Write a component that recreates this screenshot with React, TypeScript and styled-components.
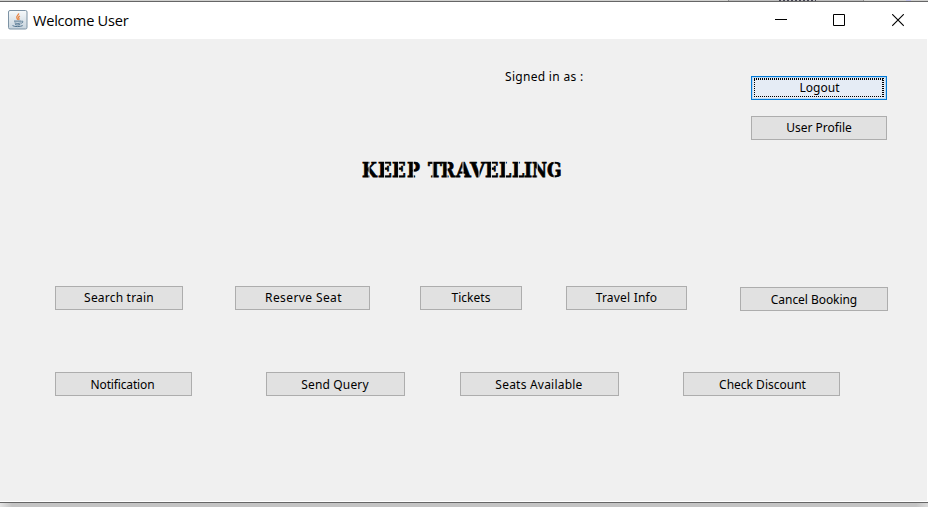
import React from "react";
import styled, { createGlobalStyle } from "styled-components";

const GlobalStyle = createGlobalStyle`
  * { box-sizing: border-box; }
  html, body { margin: 0; padding: 0; overflow: hidden; }
`;

const Desktop = styled.div`
  width: 928px;
  height: 507px;
  display: flex;
  flex-direction: column;
  overflow: hidden;
  background: linear-gradient(to right, #e4e4e4 0, #c4c4c4 12px, #c4c4c4 916px, #dadada 928px);
`;

const BackdropEdge = styled.div`
  height: 1px;
  flex: none;
  display: flex;
  background: #d1d1cf;
`;

const BackdropButton = styled.div`
  width: 136px;
  height: 1px;
  margin-left: 728px;
  background: #bdbdbd;
  border: solid #8e8e8e;
  border-width: 0 1px;
  padding-left: 50px;
`;

const BackdropText = styled.div`
  width: 37px;
  height: 1px;
  background: repeating-linear-gradient(to right, #434250 0 2px, #bdbdbd 2px 4px);
`;

const BackdropAccent = styled.div`
  width: 5px;
  height: 1px;
  margin-left: 42px;
  background: #bdbde4;
`;

const Window = styled.main`
  height: 502px;
  flex: none;
  display: flex;
  flex-direction: column;
  background: #fff;
  border-top: 1px solid #666;
  border-bottom: 1px solid #666;
`;

const TitleBar = styled.header`
  height: 37px;
  flex: none;
  display: flex;
  align-items: center;
  padding: 0 1px 2px 8px;
`;

const JavaIcon = styled.svg`
  width: 20px;
  height: 20px;
  display: block;
  flex: none;
`;

const WindowTitle = styled.div`
  margin-left: 5px;
  width: 120px;
  font: 14.6px/20px "Open Sans", "Noto Sans", sans-serif;
  letter-spacing: -0.25px;
  white-space: nowrap;
  color: #000;
`;

const Controls = styled.div`
  margin-left: auto;
  display: flex;
`;

const Control = styled.button<{ $width: number }>`
  width: ${(p) => p.$width}px;
  height: 37px;
  padding: 2px 0 0;
  border: 0;
  background: none;
  display: flex;
  align-items: center;
  justify-content: flex-start;
  & svg { display: block; }
`;

const Content = styled.section`
  height: 462px;
  flex: none;
  margin: 0 1px 1px 0;
  background: #f0f0f0;
  display: flex;
  flex-direction: column;
  font-family: "Noto Sans", sans-serif;
  color: #000;
`;

const Top = styled.div`
  display: flex;
  height: 101px;
  padding: 37px 0 0 505px;
`;

const Status = styled.div`
  width: 246px;
  height: 18px;
  margin-top: -8px;
  font-size: 12px;
  line-height: 18px;
  letter-spacing: 0.3px;
  white-space: pre;
`;

const AccountActions = styled.div`
  display: flex;
  flex-direction: column;
  gap: 16px;
`;

const Button = styled.button<{ $width: number; $spacing?: number; $gap?: number; $drop?: number; $low?: boolean; $indent?: number }>`
  width: ${(p) => p.$width}px;
  height: 24px;
  flex: none;
  margin: ${(p) => p.$drop ?? 0}px 0 0 ${(p) => p.$gap ?? 0}px;
  padding: ${(p) => (p.$low ? 1 : 0)}px 0 0;
  border: 1px solid #adadad;
  border-radius: 0;
  background: #e1e1e1;
  color: #000;
  font: 12px/${(p) => (p.$low ? 21 : 22)}px "Noto Sans", sans-serif;
  letter-spacing: ${(p) => p.$spacing ?? 0}px;
  text-indent: ${(p) => p.$indent ?? 0}px;
  white-space: nowrap;
`;

const FocusedButton = styled(Button)`
  border-color: #0078d7;
  background: #e5ecf5;
  box-shadow: inset 0 0 0 1px #b9d9f3;
  display: grid;
`;

const FocusMark = styled.span`
  margin: 1px 2px 2px;
  height: 19px;
  line-height: 19px;
  text-indent: 1px;
  background:
    repeating-linear-gradient(to right, #000 0 1px, transparent 1px 2px) 0 0 / 100% 2px no-repeat,
    repeating-linear-gradient(to right, #000 0 1px, transparent 1px 2px) 0 100% / 100% 1px no-repeat,
    repeating-linear-gradient(to bottom, #000 0 1px, transparent 1px 2px) 0 0 / 1px 100% no-repeat,
    repeating-linear-gradient(to bottom, #000 0 1px, transparent 1px 2px) 100% 0 / 2px 100% no-repeat;
`;

const Heading = styled.h1`
  display: flex;
  height: 28px;
  margin: 16px 0 0 361.5px;
  font: 900 20.5px/28px "DejaVu Serif", "Liberation Serif", serif;
  white-space: pre;
`;

const Word = styled.span`
  display: flex;
  margin-right: 7.5px;
`;

/* A heavy serif letter with the narrow vertical slit of a stencil plate. */
const StencilLetter = styled.span<{ $advance: number; $scale: number; $slit: number }>`
  position: relative;
  display: block;
  width: ${(p) => p.$advance / p.$scale}px;
  margin-right: ${(p) => p.$advance - p.$advance / p.$scale}px;
  transform: scaleX(${(p) => p.$scale});
  transform-origin: left;
  -webkit-text-stroke: 0.75px #000;
  &::after {
    content: "";
    position: absolute;
    left: ${(p) => p.$slit / p.$scale}px;
    top: 5px;
    width: ${(p) => 0.8 / p.$scale}px;
    height: 18px;
    background: #f0f0f0;
  }
`;

const MainActions = styled.nav`
  display: flex;
  height: 24px;
  margin-top: 102px;
  padding-left: 55px;
`;

const MoreActions = styled(MainActions)`
  margin-top: 62px;
`;

type Action = { label: string; width: number; gap: number; drop?: number; low?: boolean; spacing: number; indent?: number };

const mainActions: Action[] = [
  { label: "Search train", width: 128, gap: 0, spacing: 0.2 },
  { label: "Reserve Seat", width: 135, gap: 52, spacing: 0.4, indent: 2 },
  { label: "Tickets", width: 102, gap: 50, spacing: 0 },
  { label: "Travel Info", width: 121, gap: 44, spacing: 0.2 },
  { label: "Cancel Booking", width: 148, gap: 53, drop: 1, low: true, spacing: -0.05 },
];

const moreActions: Action[] = [
  { label: "Notification", width: 137, gap: 0, low: true, spacing: -0.15, indent: -2 },
  { label: "Send Query", width: 139, gap: 74, low: true, spacing: 0.15, indent: -1 },
  { label: "Seats Available", width: 159, gap: 55, low: true, spacing: 0.22, indent: -1 },
  { label: "Check Discount", width: 157, gap: 64, low: true, spacing: 0, indent: 2 },
];

const renderAction = ({ label, width, gap, drop, low, spacing, indent }: Action) => (
  <Button key={label} $width={width} $gap={gap} $drop={drop} $low={low} $spacing={spacing} $indent={indent}>{label}</Button>
);

type Letter = [glyph: string, advance: number, scale: number, slit: number];

const headingWords: Letter[][] = [
  [["K", 16.2, 0.83, 6.3], ["E", 14.6, 0.88, 6], ["E", 14.3, 0.88, 6], ["P", 13.4, 0.84, 6]],
  [["T", 13.8, 0.9, 4.2], ["R", 14.2, 0.82, 6], ["A", 14, 0.93, 6.3], ["V", 15.8, 0.95, 8.7], ["E", 14, 0.86, 6], ["L", 12.6, 0.85, 6], ["L", 12.6, 0.85, 6], ["I", 7.8, 0.85, 99], ["N", 14.8, 0.8, 5], ["G", 14.5, 0.84, 6.8]],
];

function CoffeeIcon() {
  return (
    <JavaIcon viewBox="0 0 20 20" aria-hidden="true">
      <defs>
        <linearGradient id="tile" x1="0" y1="0" x2="0" y2="1">
          <stop stopColor="#f7fafb" />
          <stop offset="1" stopColor="#c6d3dd" />
        </linearGradient>
      </defs>
      <rect x=".5" y=".5" width="18.5" height="18.5" rx="1.5" fill="url(#tile)" stroke="#7d93a5" />
      <path d="M10.6 3.4c.5 1.8-2.9 2.5-1.7 4.5.4.7.8 1 .6 2M12 6c-2 .8-1.7 1.5-1 2.6.3.6 0 .9-.5 1.4" fill="none" stroke="#e98543" strokeWidth="1.3" />
      <path d="M6 11.1h7.3M6.6 12.9c2 .7 4.5.6 6.1 0M7.2 14.5c1.5.6 3.6.6 5 0M13.5 11.3c2.2-.6 1.7 1.6-.3 1.9M4.5 15.6c2.4 1.4 7.7 1.2 10.2 0" fill="none" stroke="#50738f" strokeWidth="1" />
    </JavaIcon>
  );
}

export default function App() {
  return (
    <>
      <GlobalStyle />
      <Desktop>
        <BackdropEdge>
          <BackdropButton><BackdropText /></BackdropButton>
          <BackdropAccent />
        </BackdropEdge>
        <Window>
          <TitleBar>
            <CoffeeIcon />
            <WindowTitle>Welcome User</WindowTitle>
            <Controls>
              <Control $width={58} aria-label="Minimize">
                <svg width="12" height="13" viewBox="0 0 12 13"><path d="M0 5.5h12" stroke="#000" /></svg>
              </Control>
              <Control $width={59} aria-label="Maximize">
                <svg width="12" height="13" viewBox="0 0 12 13"><path d="M.5.5h11v11H.5z" fill="none" stroke="#000" /></svg>
              </Control>
              <Control $width={35} aria-label="Close">
                <svg width="12" height="13" viewBox="0 0 12 13"><path d="m.2.2 11.6 11.6m0-11.6L.2 11.8" stroke="#000" strokeWidth="1.1" /></svg>
              </Control>
            </Controls>
          </TitleBar>
          <Content>
            <Top>
              <Status>Signed in as :</Status>
              <AccountActions>
                <FocusedButton $width={136}><FocusMark>Logout</FocusMark></FocusedButton>
                <Button $width={136}>User Profile</Button>
              </AccountActions>
            </Top>
            <Heading aria-label="KEEP TRAVELLING">
              {headingWords.map((word, w) => (
                <Word key={w}>
                  {word.map(([glyph, advance, scale, slit], i) => (
                    <StencilLetter key={i} $advance={advance} $scale={scale} $slit={slit}>{glyph}</StencilLetter>
                  ))}
                </Word>
              ))}
            </Heading>
            <MainActions>{mainActions.map(renderAction)}</MainActions>
            <MoreActions>{moreActions.map(renderAction)}</MoreActions>
          </Content>
        </Window>
      </Desktop>
    </>
  );
}
